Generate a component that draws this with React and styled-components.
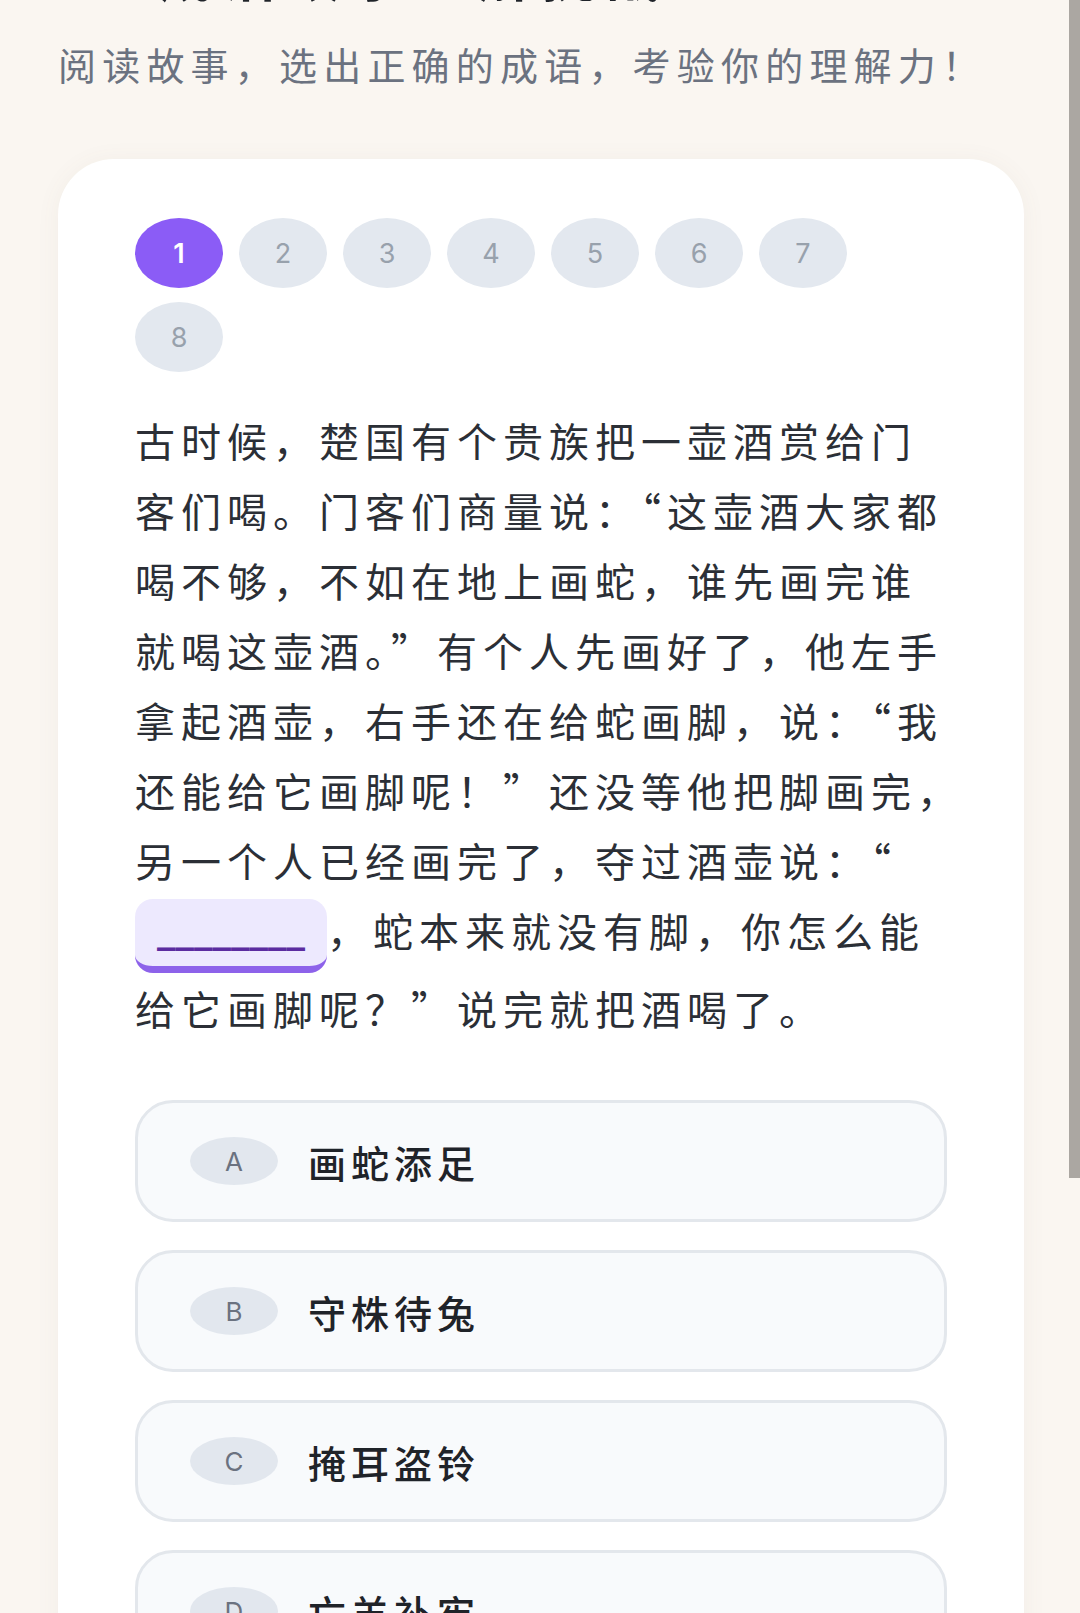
import React from 'react'
import styled, { createGlobalStyle } from 'styled-components'

const GlobalStyle = createGlobalStyle`
	html, body {
		margin: 0;
		padding: 0;
		background: #faf6f1;
		overflow: hidden;
	}
	body {
		font-family: 'Noto Sans CJK SC', 'Noto Sans', sans-serif;
	}
`

const Page = styled.div`
	height: 1613px;
	overflow: hidden;
	padding: 0 56px 0 58px;
	background: #faf6f1;
`

const Header = styled.header`
	display: flex;
	flex-direction: column;
`

const Title = styled.h1`
	margin: -58px 0 0 100px;
	font-size: 54px;
	line-height: 64px;
	font-weight: 700;
	letter-spacing: 10px;
	color: #1f2329;
`

const Subtitle = styled.p`
	margin: 33px 0 0;
	font-size: 38px;
	line-height: 50px;
	letter-spacing: 6.2px;
	color: #6b7280;
`

const Card = styled.main`
	margin-top: 70px;
	background: #fff;
	border-radius: 56px;
	padding: 59px 77px 200px;
	box-shadow: 0 2px 24px rgba(120, 100, 80, 0.06);
`

const Steps = styled.div`
	display: flex;
	flex-wrap: wrap;
	gap: 14px 16px;
`

const Step = styled.div`
	width: 88px;
	height: 70px;
	border-radius: 50%;
	display: flex;
	align-items: center;
	justify-content: center;
	background: ${p => (p.$active ? '#8b5cf6' : '#e3e8ef')};
	color: ${p => (p.$active ? '#fff' : '#98a1ac')};
	font-family: Inter, 'Liberation Sans', sans-serif;
	font-size: 27px;
	font-weight: ${p => (p.$active ? 600 : 400)};
`

const Story = styled.div`
	margin-top: 33px;
	font-size: 40px;
	line-height: 70px;
	letter-spacing: 6px;
	color: #2b2f36;
	white-space: pre;
`

const Blank = styled.span`
	display: inline-block;
	vertical-align: middle;
	box-sizing: border-box;
	height: 74px;
	padding: 0 22px;
	background: #ede9fe;
	border-radius: 18px;
	border-bottom: 7px solid #8d62ea;
	line-height: 62px;
	letter-spacing: 0;
	font-size: 37px;
	color: #5b2ca0;
	font-family: 'DejaVu Sans', sans-serif;
	font-weight: 700;
`

const Options = styled.div`
	margin-top: 57px;
	display: flex;
	flex-direction: column;
	gap: 28px;
`

const Option = styled.div`
	box-sizing: border-box;
	height: 122px;
	display: flex;
	align-items: center;
	gap: 30px;
	padding-left: 52px;
	border: 3px solid #e3e7ec;
	border-radius: 38px;
	background: #f8fafc;
`

const Badge = styled.span`
	width: 88px;
	height: 48px;
	border-radius: 50%;
	background: #e2e7ee;
	display: flex;
	align-items: center;
	justify-content: center;
	font-family: Inter, 'Liberation Sans', sans-serif;
	font-size: 26px;
	color: #6b7280;
`

const OptionText = styled.span`
	font-size: 38px;
	letter-spacing: 5px;
	font-weight: 500;
	color: #1f2329;
`

const Scrollbar = styled.div`
	position: fixed;
	top: 0;
	right: 0;
	width: 11px;
	height: 1178px;
	background: #aba7a2;
`

const steps = [1, 2, 3, 4, 5, 6, 7, 8]

const options = [
	{ key: 'A', text: '画蛇添足' },
	{ key: 'B', text: '守株待兔' },
	{ key: 'C', text: '掩耳盗铃' },
	{ key: 'D', text: '亡羊补牢' },
]

const storyBefore = `古时候，楚国有个贵族把一壶酒赏给门
客们喝。门客们商量说：“这壶酒大家都
喝不够，不如在地上画蛇，谁先画完谁
就喝这壶酒。”有个人先画好了，他左手
拿起酒壶，右手还在给蛇画脚，说：“我
还能给它画脚呢！”还没等他把脚画完，
另一个人已经画完了，夺过酒壶说：“
`

const storyAfter = `，蛇本来就没有脚，你怎么能
给它画脚呢？”说完就把酒喝了。`

export default function App() {
	return (
		<>
			<GlobalStyle />
			<Page>
				<Header>
					<Title>成语故事理解挑战</Title>
					<Subtitle>阅读故事，选出正确的成语，考验你的理解力！</Subtitle>
				</Header>
				<Card>
					<Steps>
						{steps.map(n => (
							<Step key={n} $active={n === 1}>{n}</Step>
						))}
					</Steps>
					<Story>
						{storyBefore}
						<Blank>________</Blank>
						{storyAfter}
					</Story>
					<Options>
						{options.map(o => (
							<Option key={o.key}>
								<Badge>{o.key}</Badge>
								<OptionText>{o.text}</OptionText>
							</Option>
						))}
					</Options>
				</Card>
			</Page>
			<Scrollbar />
		</>
	)
}
